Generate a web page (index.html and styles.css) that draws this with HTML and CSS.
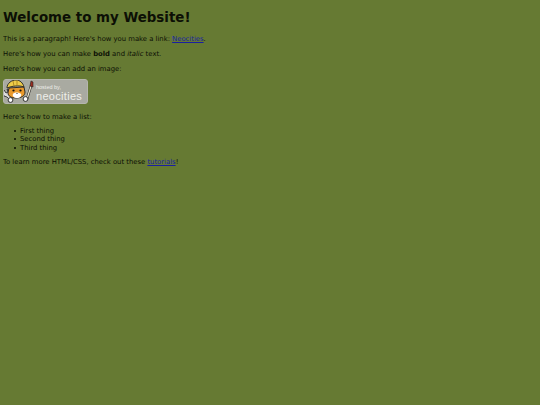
FILE: index.html
```html
<!DOCTYPE html>
<html lang="en">
<head>
  <meta charset="utf-8">
  <title>My Website</title>
  <link rel="stylesheet" href="styles.css">
</head>
<body>
  <h1>Welcome to my Website!</h1>
  <p>This is a paragraph! Here's how you make a link: <a href="#">Neocities</a>.</p>
  <p>Here's how you can make <strong>bold</strong> and <em>italic</em> text.</p>
  <p>Here's how you can add an image:</p>
  <div class="badge">
    <svg class="badge-cat" width="31" height="25" viewBox="0 0 31 25">
      <!-- wrench -->
      <path d="M1 11l2 3 2-1-1-3 2 1 1 3-1 2 3 3-2 2-3-3-3-1-1-3z" fill="#ddd" stroke="#222" stroke-width=".8"/>
      <!-- brush -->
      <path d="M24 20l4-13" stroke="#222" stroke-width="2.4"/>
      <path d="M24 20l4-13" stroke="#f2e9d0" stroke-width="1.2"/>
      <path d="M27 7l1-5 2 1 0 5z" fill="#9c2f22" stroke="#222" stroke-width=".6"/>
      <!-- head -->
      <path d="M6 9l-1 5c0 3 3 5 8 5s9-2 9-6l-1-5z" fill="#ea9a2c" stroke="#222" stroke-width=".9"/>
      <path d="M10 15c1-2 6-2 8 0 1 2-1 4-4 4s-5-2-4-4z" fill="#fff"/>
      <circle cx="10.5" cy="11.5" r="1.1" fill="#111"/>
      <circle cx="17.5" cy="11.5" r="1.1" fill="#111"/>
      <path d="M13 14h2l-1 1z" fill="#222"/>
      <!-- helmet -->
      <path d="M4 9c0-5 5-8 9-8s7 3 8 7c-5-2-12-1-17 1z" fill="#edcb4a" stroke="#222" stroke-width=".9"/>
      <path d="M10 2l1 5M14 1.500v5" stroke="#a87d18" stroke-width=".8"/>
      <!-- paws -->
      <circle cx="7.500" cy="21" r="2.400" fill="#fff" stroke="#222" stroke-width=".9"/>
      <circle cx="22.500" cy="20" r="2.400" fill="#fff" stroke="#222" stroke-width=".9"/>
    </svg>
    <div class="badge-text">
      <span class="badge-hosted">hosted by,</span>
      <span class="badge-name">neocities</span>
    </div>
  </div>
  <p>Here's how to make a list:</p>
  <ul>
    <li>First thing</li>
    <li>Second thing</li>
    <li>Third thing</li>
  </ul>
  <p>To learn more HTML/CSS, check out these <a href="#">tutorials</a>!</p>
</body>
</html>
```

FILE: styles.css
```css
body {
  margin: 3px;
  background-color: #667a33;
  color: #0c0f05;
  font-family: "DejaVu Sans", sans-serif;
  font-size: 6.83px;
  line-height: 8.5px;
}

h1 {
  margin: 7px 0 9px;
  font-size: 13.4px;
  line-height: 16px;
}

p {
  margin: 0 0 6.5px;
}

a {
  color: #1a1fa0;
}

ul {
  margin: -1px 0 5.5px;
  padding-left: 17px;
  list-style: none;
}

li {
  display: flex;
  align-items: center;
}

li::before {
  content: "";
  width: 2px;
  height: 2px;
  margin-left: -6px;
  margin-right: 4px;
  border-radius: 50%;
  background-color: #0c0f05;
}

.badge {
  display: flex;
  box-sizing: border-box;
  width: 85px;
  height: 25px;
  margin: -1px 0 8.5px;
  border: 1px solid #b5b5ad;
  border-radius: 3px;
  background-color: #a9aaa1;
  overflow: hidden;
}

.badge-cat {
  flex: none;
  margin: -1px 0 -1px -1px;
}

.badge-text {
  display: flex;
  flex-direction: column;
  padding: 3px 0 0 2px;
  color: #eeeeea;
  font-family: "Liberation Sans", sans-serif;
}

.badge-hosted {
  font-size: 5.5px;
}

.badge-name {
  font-size: 11px;
  letter-spacing: 0.3px;
}
```
